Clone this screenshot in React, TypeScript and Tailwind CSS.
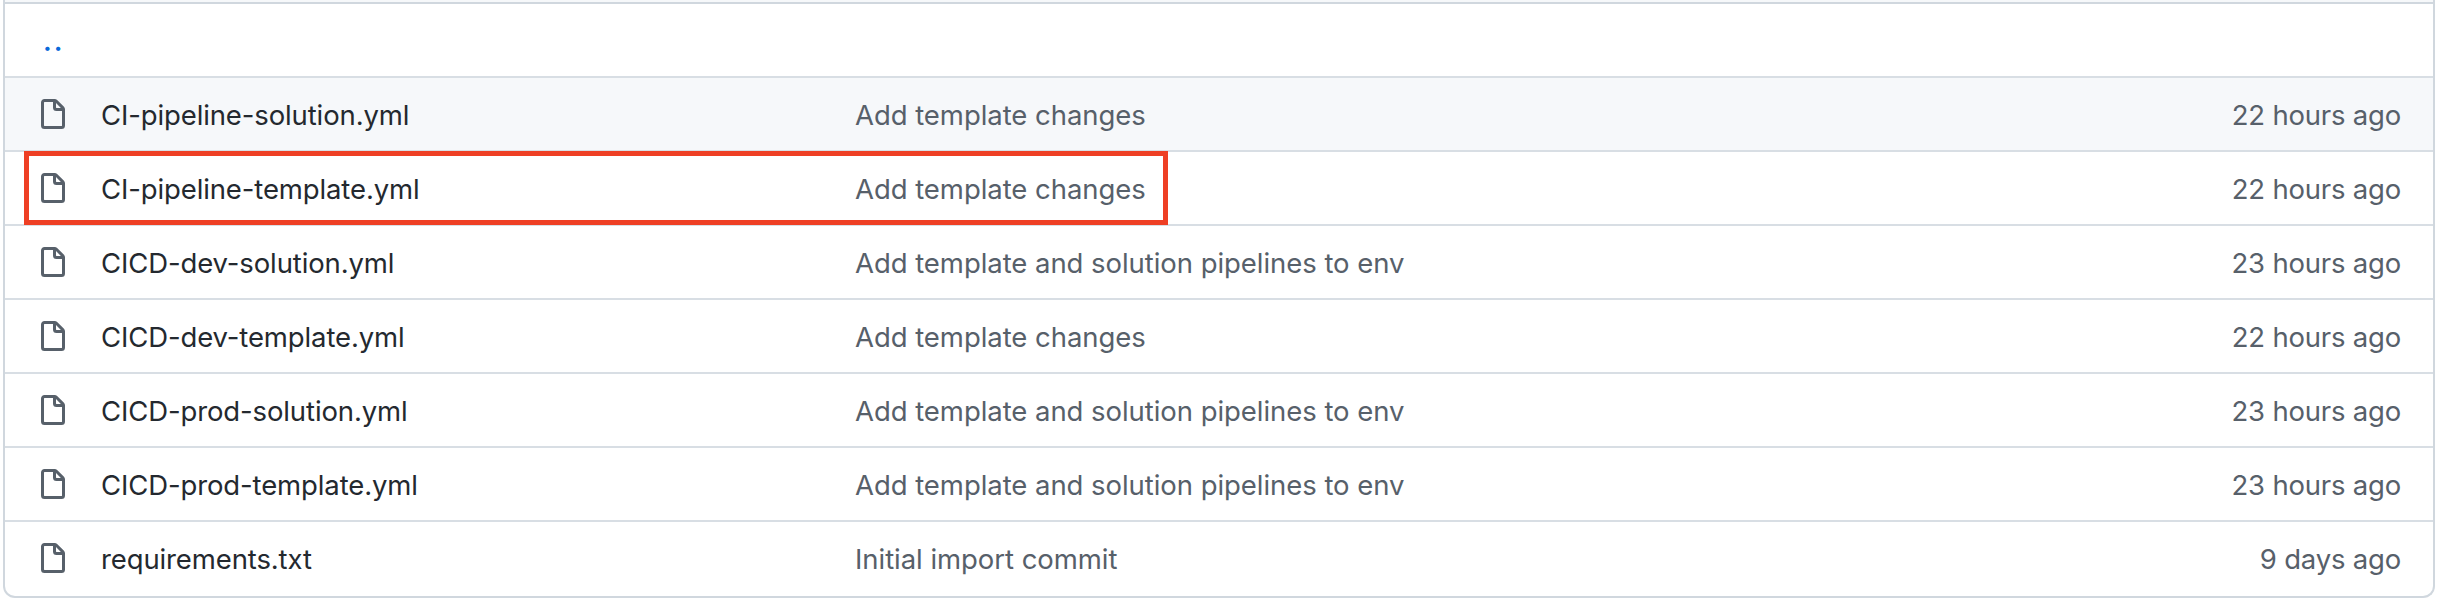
const rows: [string, string, string][] = [
  ["CI-pipeline-solution.yml", "Add template changes", "22 hours ago"],
  ["CI-pipeline-template.yml", "Add template changes", "22 hours ago"],
  ["CICD-dev-solution.yml", "Add template and solution pipelines to env", "23 hours ago"],
  ["CICD-dev-template.yml", "Add template changes", "22 hours ago"],
  ["CICD-prod-solution.yml", "Add template and solution pipelines to env", "23 hours ago"],
  ["CICD-prod-template.yml", "Add template and solution pipelines to env", "23 hours ago"],
  ["requirements.txt", "Initial import commit", "9 days ago"],
];

function FileIcon() {
  return (
    <svg viewBox="0 0 16 16" className="h-8 w-8 shrink-0 fill-[#57606a]">
      <path
        fillRule="evenodd"
        d="M3.75 1.5a.25.25 0 00-.25.25v11.5c0 .138.112.25.25.25h8.5a.25.25 0 00.25-.25V6H9.75A1.75 1.75 0 018 4.25V1.5H3.75zm5.75.56v2.19c0 .138.112.25.25.25h2.19L9.5 2.06zM2 1.75C2 .784 2.784 0 3.75 0h5.086c.464 0 .909.184 1.237.513l3.414 3.414c.329.328.513.773.513 1.237v8.086A1.75 1.75 0 0112.25 15h-8.5A1.75 1.75 0 012 13.25V1.75z"
      />
    </svg>
  );
}

export default function App() {
  return (
    <div className="relative h-[606px] w-[2448px] bg-white pr-[13px] pl-[3px] font-['Inter',sans-serif] text-[27.5px]">
      <div className="h-[598px] overflow-hidden rounded-b-xl border-x-2 border-b-2 border-[#d0d7de]">
        <div className="h-1 border-b-2 border-[#d0d7de] bg-[#f6f8fa]" />
        <div className="flex h-[72px] items-center pt-[3px] pl-[38px] font-semibold tracking-[2px] text-[#0969da]">
          <span>..</span>
        </div>
        {rows.map(([name, message, age], i) => (
          <div
            key={name}
            className={`flex h-[74px] items-center border-t-2 border-[#d8dee4] px-8 pt-0.5 ${i === 0 ? "bg-[#f6f8fa]" : ""}`}
          >
            <FileIcon />
            <span className="ml-8 w-[754px] pt-0.5 tracking-[-0.12px] text-[#24292f]">{name}</span>
            <span className="flex-1 pt-0.5 tracking-[-0.05px] text-[#57606a]">{message}</span>
            <span className="pt-0.5 tracking-[-0.2px] text-[#57606a]">{age}</span>
          </div>
        ))}
      </div>
      <div className="absolute top-[151px] left-[24px] h-[74px] w-[1144px] border-5 border-[#ee3f24]" />
    </div>
  );
}
